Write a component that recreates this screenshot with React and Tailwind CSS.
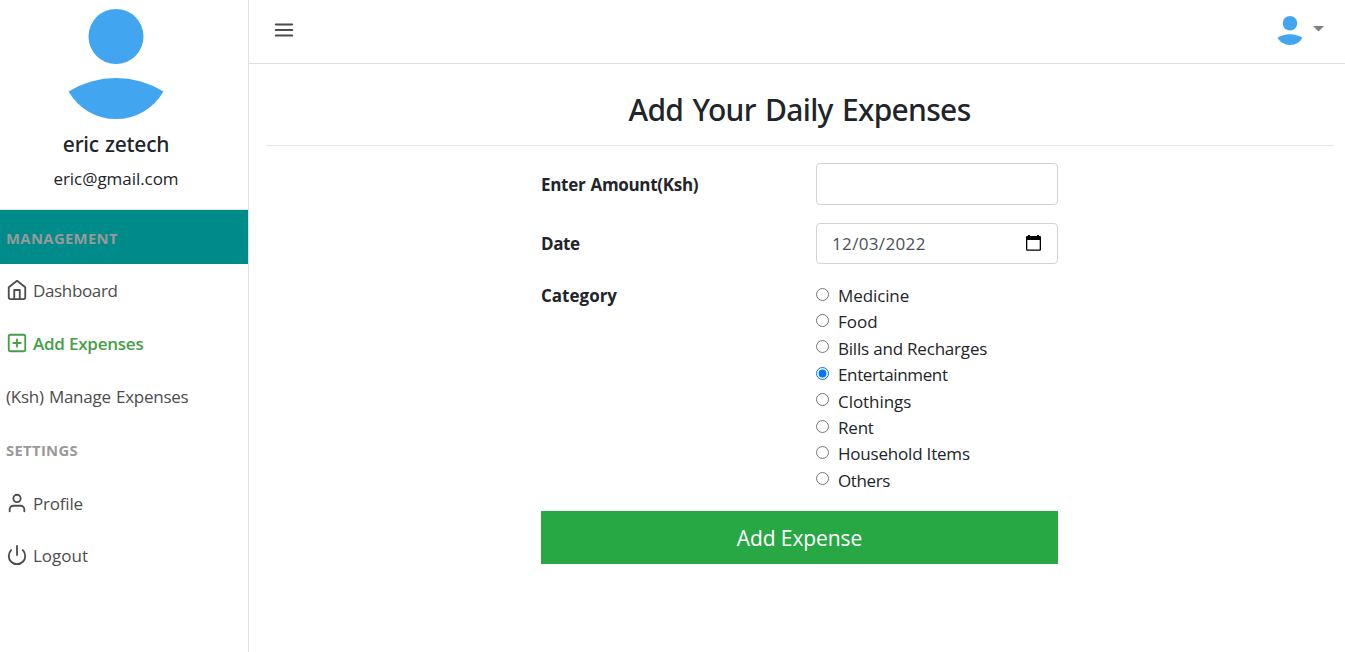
import React from "react";
import { FiHome, FiPlusSquare, FiUser, FiPower, FiMenu } from "react-icons/fi";

const CATEGORIES = [
  { name: "Medicine", tracking: "tracking-[-0.1px]" },
  { name: "Food", tracking: "tracking-[0px]" },
  { name: "Bills and Recharges", tracking: "tracking-[-0.2px]" },
  { name: "Entertainment", tracking: "tracking-[-0.37px]" },
  { name: "Clothings", tracking: "tracking-[-0.05px]" },
  { name: "Rent", tracking: "tracking-[-0.2px]" },
  { name: "Household Items", tracking: "tracking-[-0.2px]" },
  { name: "Others", tracking: "tracking-[-0.4px]" },
];

function Avatar({ className }) {
  return (
    <svg viewBox="0 0 96 110" className={className} fill="#42a5f0" aria-hidden="true">
      <circle cx="48" cy="27.5" r="27.5" />
      <path d="M0.6 82.5 A90 90 0 0 1 95.4 82.5 A54.6 54.6 0 0 1 0.6 82.5 Z" />
    </svg>
  );
}

function NavItem({ icon: Icon, label, height, active, tracking }) {
  return (
    <a
      href="#"
      className={`flex items-center gap-[5px] pl-[6px] text-[17px] ${height} ${tracking} ${
        active ? "font-semibold text-[#43a047]" : "text-[#4d4d4d]"
      }`}
    >
      {Icon && <Icon size={22} strokeWidth={2} className="mb-[2px] shrink-0" />}
      <span className="whitespace-nowrap">{label}</span>
    </a>
  );
}

function Sidebar() {
  return (
    <aside className="w-[249px] shrink-0 border-r border-[#dee2e6]">
      <div className="flex h-[210px] flex-col items-center border-b border-[#dee2e6] pr-4 pt-[9px]">
        <Avatar className="h-[110px] w-[96px]" />
        <h5 className="mt-[12px] whitespace-nowrap font-['Noto_Sans',sans-serif] text-[21px] font-medium leading-[26px] tracking-[-0.25px] [word-spacing:1px]">
          eric zetech
        </h5>
        <p className="mt-[9px] whitespace-nowrap text-[17px] leading-[26px] tracking-[-0.05px]">eric@gmail.com</p>
      </div>
      <div className="flex h-[54px] items-center bg-[#008b8b] pl-[6px] pt-[3px] text-[14.8px] font-bold text-[#999] tracking-[0.37px]">
        MANAGEMENT
      </div>
      <nav>
        <NavItem icon={FiHome} label="Dashboard" height="h-[53px]" tracking="tracking-[-0.35px]" />
        <NavItem icon={FiPlusSquare} label="Add Expenses" height="h-[53px]" active tracking="tracking-[-0.23px]" />
        <NavItem label="(Ksh) Manage Expenses" height="h-[53px]" tracking="tracking-[-0.25px] [word-spacing:1px]" />
      </nav>
      <div className="flex h-[54px] items-center pl-[6px] pt-[1px] text-[14.8px] font-bold text-[#999] tracking-[0.33px]">
        SETTINGS
      </div>
      <nav>
        <NavItem icon={FiUser} label="Profile" height="h-[53px]" tracking="tracking-[-0.2px]" />
        <NavItem icon={FiPower} label="Logout" height="h-[52px]" tracking="tracking-[0px]" />
      </nav>
    </aside>
  );
}

function CalendarIcon() {
  return (
    <svg width="15" height="16" viewBox="0 0 15 16" className="mb-px" aria-hidden="true">
      <path
        fill="#000"
        fillRule="evenodd"
        d="M2 0h2v1h7V0h2v1h1.2l.8.8V15l-.8.8H.8L0 15V1.800l.8-.8H2zM1.300 5v9.400h12.400V5z"
      />
    </svg>
  );
}

export default function App() {
  return (
    <div className="flex h-[652px] w-[1345px] overflow-hidden bg-white font-['Open_Sans',sans-serif] text-[#212529]">
      <Sidebar />
      <div className="flex min-w-0 grow flex-col">
        <header className="flex h-[64px] shrink-0 items-start justify-between border-b border-[#dee2e6] pl-[24px] pr-[21px]">
          <button className="mt-[19px] text-[#4d4d4d]" aria-label="Menu">
            <FiMenu size={22} className="block" />
          </button>
          <button className="flex items-start" aria-label="Account">
            <Avatar className="mt-[16px] h-[29px] w-[26px]" />
            <svg width="11" height="6" viewBox="0 0 11 6" className="ml-[10px] mt-[26px]" fill="#808080" aria-hidden="true">
              <path d="M0 0h11L5.500 5.500z" />
            </svg>
          </button>
        </header>
        <main className="pl-[17px] pr-[11px]">
          <h3 className="flex h-[81px] items-center justify-center whitespace-nowrap pr-px pt-[10px] font-['Noto_Sans',sans-serif] text-[30px] font-medium tracking-[-0.7px] [word-spacing:2.3px]">
            Add Your Daily Expenses
          </h3>
          <hr className="border-[#e5e5e5]" />
          <form className="ml-[275px] mt-[17px] w-[517px]" onSubmit={(e) => e.preventDefault()}>
            <div className="flex h-[42px] items-center justify-between">
              <label className="pt-[2px] text-[17px] font-bold tracking-[-0.3px] [word-spacing:1px]">Enter Amount(Ksh)</label>
              <input type="text" className="h-[42px] w-[242px] rounded-[4px] border border-[#ced4da] px-[15px] outline-none" />
            </div>
            <div className="mt-[18px] flex h-[41px] items-center justify-between">
              <label className="text-[17px] font-bold tracking-[-0.4px]">Date</label>
              <div className="flex h-[41px] w-[242px] items-center justify-between rounded-[4px] border border-[#ced4da] pl-[15px] pr-[16.5px] text-[#495057]">
                <span className="text-[17px] tracking-[0.35px]">12/03/2022</span>
                <CalendarIcon />
              </div>
            </div>
            <fieldset className="mt-[19px] flex justify-between">
              <legend className="float-left h-[26px] text-[17px] font-bold leading-[26px]">Category</legend>
              <div className="w-[242px]">
                {CATEGORIES.map(({ name, tracking }) => (
                  <label key={name} className="flex h-[26.4px] items-start text-[17px] leading-[26.4px]">
                    <input
                      type="radio"
                      name="category"
                      defaultChecked={name === "Entertainment"}
                      className="m-0 mt-[4.6px] h-[13px] w-[13px] shrink-0"
                    />
                    <span className={`ml-[9px] whitespace-nowrap ${tracking}`}>{name}</span>
                  </label>
                ))}
              </div>
            </fieldset>
            <button className="mt-[17px] flex h-[53px] w-full items-center justify-center bg-[#28a745] pt-[2px] text-[21px] text-white tracking-[-0.1px]">
              Add Expense
            </button>
          </form>
        </main>
      </div>
    </div>
  );
}
